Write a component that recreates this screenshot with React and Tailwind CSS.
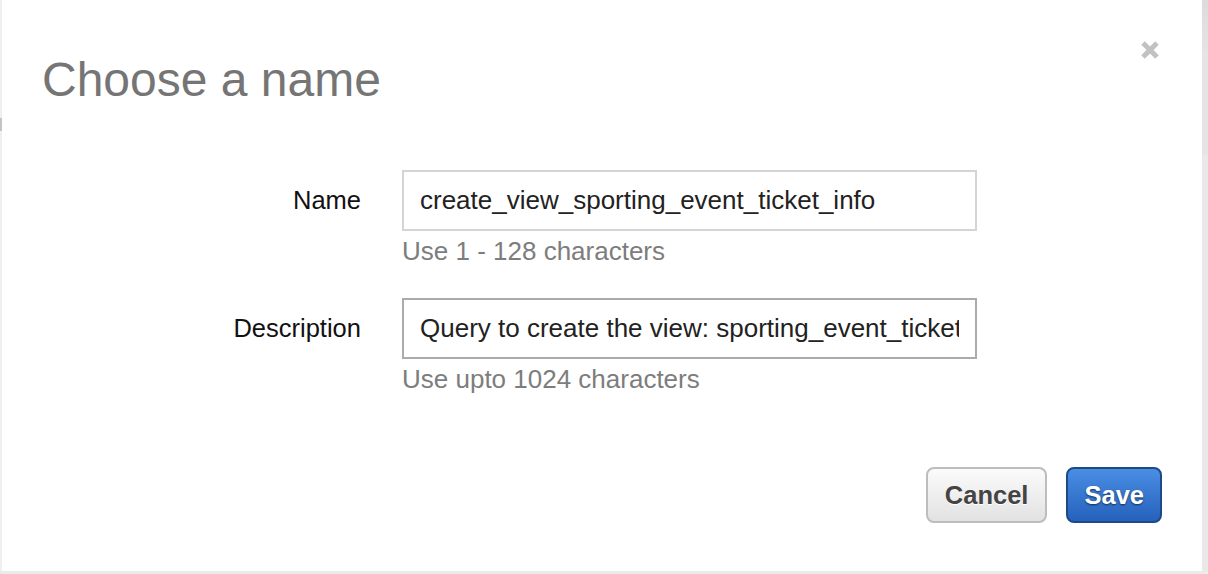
export default function App() {
  return (
    <div className="flex h-[574px] w-full bg-[#ebebeb] pb-[3px] font-['Liberation_Sans',Arial,sans-serif]">
      {/* left edge of the page behind */}
      <div className="flex w-[2px] flex-col bg-[#efefef]">
        <div className="mt-[118px] h-[13px] bg-[#c4c4c4]" />
      </div>

      {/* Modal */}
      <div className="relative flex flex-1 flex-col bg-white px-[40px] pb-[48px] pt-[56px]">
        <button className="absolute right-[42px] top-[40px] h-[20px] w-[20px]">
          <svg viewBox="0 0 20 20" className="h-[20px] w-[20px]">
            <path d="M3 3L17 17M17 3L3 17" stroke="#c2c2c2" strokeWidth="5" />
          </svg>
        </button>

        <h1 className="text-[48px] leading-none font-normal text-[#757575]">Choose a name</h1>

        <div className="mt-[66px] flex flex-col gap-[32px]">
          <div className="flex">
            <div className="flex h-[61px] w-[319px] items-center justify-end text-[25.5px] text-[#111]">
              Name
            </div>
            <div className="ml-[41px] flex flex-col">
              <input
                readOnly
                value="create_view_sporting_event_ticket_info"
                className="h-[61px] w-[575px] border-2 border-[#d4d4d4] bg-white pl-[16px] pr-[16px] text-[26px] text-[#222] outline-none"
              />
              <p className="mt-[6px] text-[26px] leading-[29px] text-[#7d7d7d]">Use 1 - 128 characters</p>
            </div>
          </div>

          <div className="flex">
            <div className="flex h-[61px] w-[319px] items-center justify-end text-[25.5px] text-[#111]">
              Description
            </div>
            <div className="ml-[41px] flex flex-col">
              <input
                readOnly
                value="Query to create the view: sporting_event_ticket_info"
                className="h-[61px] w-[575px] border-2 border-[#ababab] bg-white pl-[16px] pr-[16px] text-[26px] text-[#222] outline-none"
              />
              <p className="mt-[6px] text-[26px] leading-[29px] text-[#7d7d7d]">Use upto 1024 characters</p>
            </div>
          </div>
        </div>

        <div className="mt-auto flex justify-end gap-[19px]">
          <button className="h-[56px] rounded-[8px] border-2 border-[#bdbdbd] bg-gradient-to-b from-[#fbfbfb] to-[#e2e2e2] px-[17px] text-[25.5px] font-bold text-[#444] [text-shadow:0_1px_0_#fff]">
            Cancel
          </button>
          <button className="h-[56px] rounded-[8px] border-2 border-[#1c4a87] bg-gradient-to-b from-[#4a8ee4] to-[#2661bb] px-[16px] text-[25.5px] font-bold text-white [text-shadow:0_1px_2px_rgba(0,0,0,0.6)]">
            Save
          </button>
        </div>
      </div>

      {/* right edge of the page behind */}
      <div className="flex w-[6px] flex-col bg-[#e9e9e9]">
        <div className="h-[50px] bg-gradient-to-b from-[#dcdcdc] to-[#e4e4e4]" />
        <div className="h-[105px] bg-[#e5e5e5]" />
      </div>
    </div>
  );
}
